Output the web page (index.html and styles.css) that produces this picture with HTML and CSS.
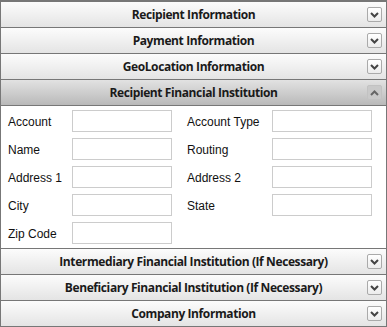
FILE: index.html
```html
<!DOCTYPE html>
<html lang="en">
<head>
  <meta charset="UTF-8">
  <title>Wire Transfer</title>
  <link rel="stylesheet" href="styles.css">
</head>
<body>
  <div class="accordion">
    <div class="head">
      <span class="title">Recipient Information</span>
      <span class="toggle"><svg width="9" height="6" viewBox="0 0 9 6"><path d="M1 1 L4.5 4.5 L8 1" fill="none" stroke="#444" stroke-width="2"/></svg></span>
    </div>
    <div class="head">
      <span class="title">Payment Information</span>
      <span class="toggle"><svg width="9" height="6" viewBox="0 0 9 6"><path d="M1 1 L4.5 4.5 L8 1" fill="none" stroke="#444" stroke-width="2"/></svg></span>
    </div>
    <div class="head">
      <span class="title">GeoLocation Information</span>
      <span class="toggle"><svg width="9" height="6" viewBox="0 0 9 6"><path d="M1 1 L4.5 4.5 L8 1" fill="none" stroke="#444" stroke-width="2"/></svg></span>
    </div>
    <div class="head active">
      <span class="title">Recipient Financial Institution</span>
      <span class="toggle"><svg width="9" height="6" viewBox="0 0 9 6"><path d="M1 5 L4.5 1.5 L8 5" fill="none" stroke="#666" stroke-width="2"/></svg></span>
    </div>
    <div class="panel">
      <div class="fields">
        <label>Account</label><input type="text">
        <label>Account Type</label><input type="text">
        <label>Name</label><input type="text">
        <label>Routing</label><input type="text">
        <label>Address 1</label><input type="text">
        <label>Address 2</label><input type="text">
        <label>City</label><input type="text">
        <label>State</label><input type="text">
        <label>Zip Code</label><input type="text">
      </div>
    </div>
    <div class="head">
      <span class="title">Intermediary Financial Institution (If Necessary)</span>
      <span class="toggle"><svg width="9" height="6" viewBox="0 0 9 6"><path d="M1 1 L4.5 4.5 L8 1" fill="none" stroke="#444" stroke-width="2"/></svg></span>
    </div>
    <div class="head">
      <span class="title">Beneficiary Financial Institution (If Necessary)</span>
      <span class="toggle"><svg width="9" height="6" viewBox="0 0 9 6"><path d="M1 1 L4.5 4.5 L8 1" fill="none" stroke="#444" stroke-width="2"/></svg></span>
    </div>
    <div class="head">
      <span class="title">Company Information</span>
      <span class="toggle"><svg width="9" height="6" viewBox="0 0 9 6"><path d="M1 1 L4.5 4.5 L8 1" fill="none" stroke="#444" stroke-width="2"/></svg></span>
    </div>
  </div>
</body>
</html>
```
FILE: styles.css
```css
body {
  margin: 0;
  font-family: "Liberation Sans", Arial, sans-serif;
  background: #fff;
}
.accordion {
  width: 385px;
  border: 1px solid #777;
  border-top-width: 2px;
}
.head {
  height: 25px;
  border-bottom: 1px solid #777;
  background: linear-gradient(#fcfcfc, #e4e4e4);
  display: flex;
  align-items: center;
  justify-content: center;
  position: relative;
}
.head.active {
  background: linear-gradient(#e2e2e2, #b9b9b9);
}
.title {
  font-family: "Open Sans", "Noto Sans", sans-serif;
  font-weight: bold;
  font-size: 12px;
  color: #1a1a1a;
  letter-spacing: -0.4px;
}
.toggle {
  position: absolute;
  right: 4px;
  top: 5px;
  width: 13px;
  height: 13px;
  border: 1px solid #aaa;
  border-radius: 2px;
  background: linear-gradient(#fff, #ececec);
  display: flex;
  align-items: center;
  justify-content: center;
}
.head.active .toggle {
  border-color: #c2c2c2;
  background: #c9c9c9;
}
.panel {
  border-bottom: 1px solid #777;
  padding: 4px 0 4px 7px;
}
.fields {
  display: grid;
  grid-template-columns: 64px 115px 85px 100px;
  grid-auto-rows: 22px;
  row-gap: 6px;
  align-items: center;
}
.fields label {
  font-size: 12px;
  color: #111;
  padding-top: 1px;
}
.fields input {
  width: 100px;
  height: 22px;
  box-sizing: border-box;
  border: 1px solid #ccc;
  margin: 0;
  padding: 0 3px;
}
```
